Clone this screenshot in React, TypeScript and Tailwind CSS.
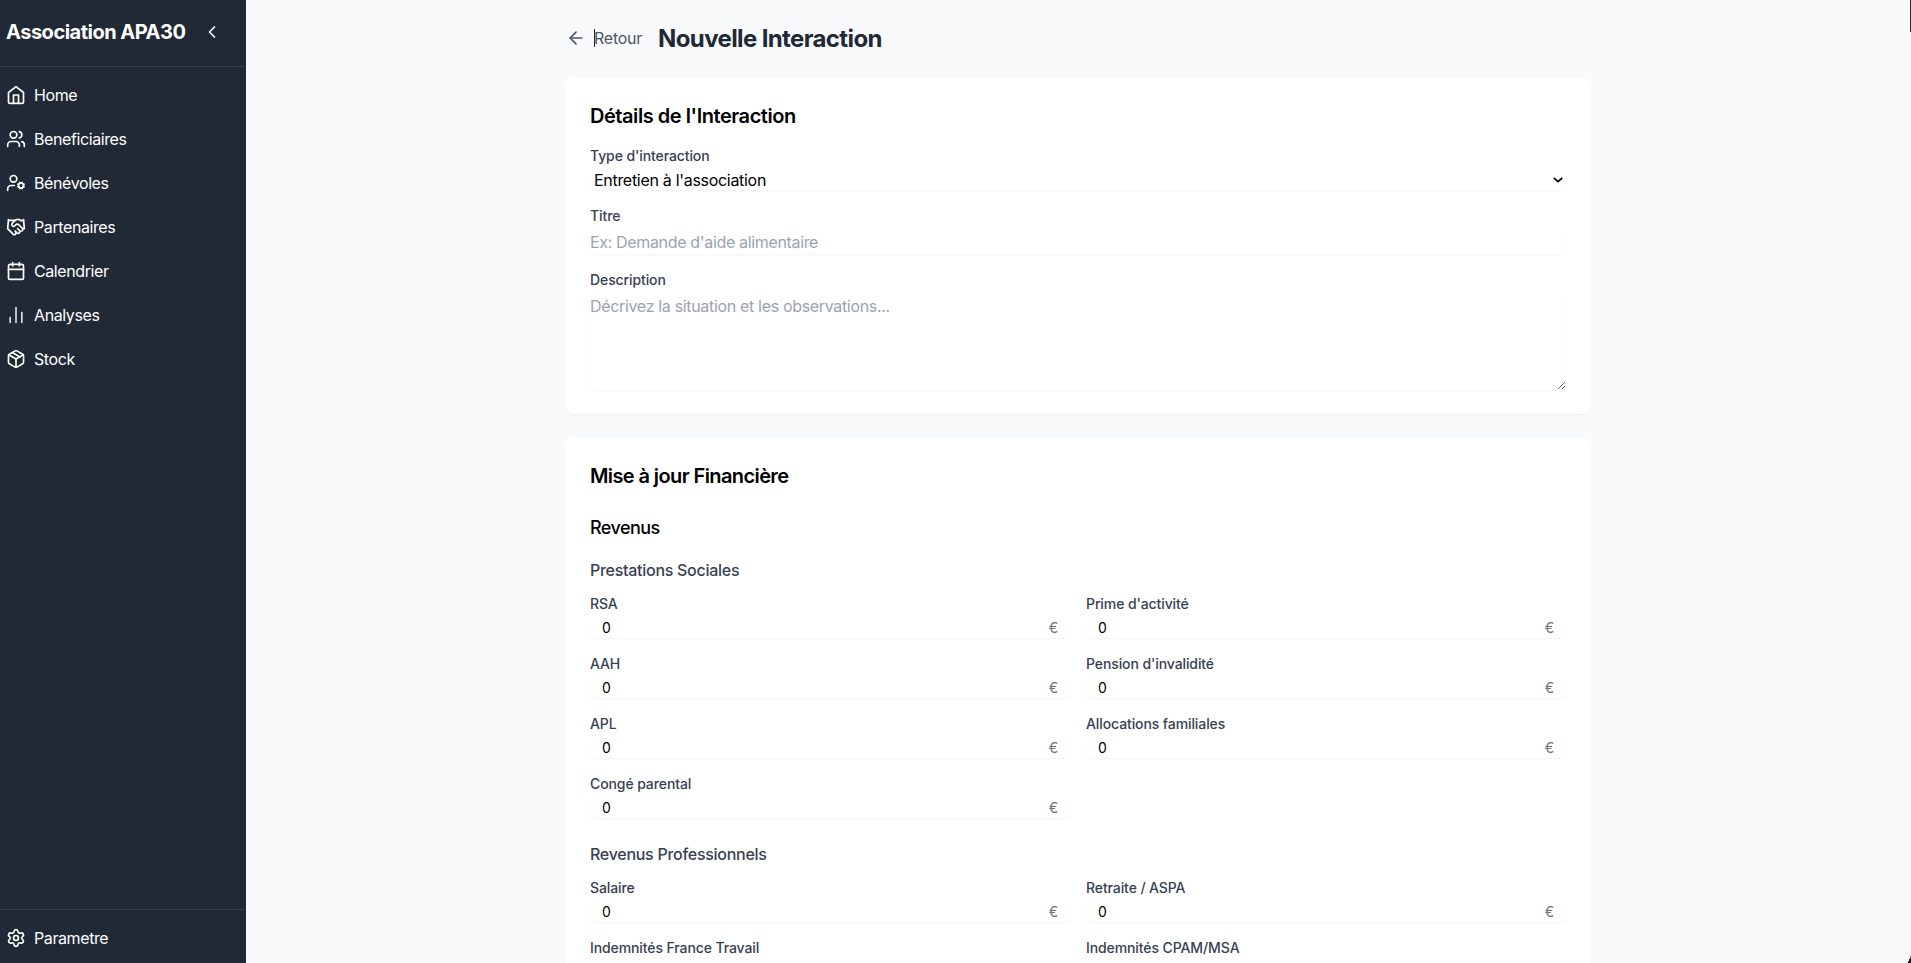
import type { ReactNode } from "react";
import {
  ArrowLeft,
  Calendar,
  ChartNoAxesColumn,
  ChevronLeft,
  Handshake,
  Package,
  Settings,
  UserCog,
  Users,
} from "lucide-react";

function HomeIcon() {
  return (
    <svg
      width="20"
      height="20"
      viewBox="0 0 24 24"
      fill="none"
      stroke="currentColor"
      strokeWidth="2"
      strokeLinecap="round"
      strokeLinejoin="round"
    >
      <path d="m3 9 9-7 9 7v11a2 2 0 0 1-2 2H5a2 2 0 0 1-2-2z" />
      <polyline points="9 22 9 12 15 12 15 22" />
    </svg>
  );
}

const navItems: { label: string; icon: ReactNode }[] = [
  { label: "Home", icon: <HomeIcon /> },
  { label: "Beneficiaires", icon: <Users size={20} /> },
  { label: "Bénévoles", icon: <UserCog size={20} /> },
  { label: "Partenaires", icon: <Handshake size={20} /> },
  { label: "Calendrier", icon: <Calendar size={20} /> },
  { label: "Analyses", icon: <ChartNoAxesColumn size={20} className="opacity-85" /> },
  { label: "Stock", icon: <Package size={20} /> },
];

function NavItem({ label, icon }: { label: string; icon: ReactNode }) {
  return (
    <a className="flex h-10 items-center gap-2 px-1.5">
      {icon}
      <span className="tracking-[-0.4px]">{label}</span>
    </a>
  );
}

function Sidebar() {
  return (
    <aside className="flex w-[246px] shrink-0 flex-col bg-[#212936] text-white">
      <div className="flex h-[67px] items-center justify-between border-b border-[#374151] pr-6 pb-[3px] pl-1.5">
        <span className="text-xl font-bold tracking-[-0.5px]">Association APA30</span>
        <ChevronLeft size={20} />
      </div>
      <nav className="flex flex-1 flex-col gap-1 pt-2">
        {navItems.map((item) => (
          <NavItem key={item.label} {...item} />
        ))}
      </nav>
      <div className="h-[54px] border-t border-[#374151] pt-2">
        <NavItem label="Parametre" icon={<Settings size={20} />} />
      </div>
    </aside>
  );
}

const labelClass = "block text-sm font-medium text-[#374151] tracking-[-0.1px]";

function Card({
  title,
  titleClass,
  children,
}: {
  title: string;
  titleClass: string;
  children: ReactNode;
}) {
  return (
    <section className="rounded-lg bg-white p-6 shadow-xs">
      <h2 className={`text-xl font-semibold text-black ${titleClass}`}>{title}</h2>
      {children}
    </section>
  );
}

function AmountField({ label }: { label: string }) {
  return (
    <div>
      <label className={labelClass}>{label}</label>
      <div className="mt-1 flex h-5 items-center justify-between rounded-md px-3 text-sm shadow-xs">
        <input defaultValue="0" className="h-5 w-40 text-black outline-none" />
        <span className="text-[#6b7280]">€</span>
      </div>
    </div>
  );
}

function AmountGroup({
  title,
  labels,
  pending = [],
}: {
  title: string;
  labels: string[];
  pending?: string[];
}) {
  return (
    <div>
      <h4 className="mb-3 font-medium tracking-[-0.28px] text-[#374151]">{title}</h4>
      <div className="grid grid-cols-2 gap-4">
        {labels.map((label) => (
          <AmountField key={label} label={label} />
        ))}
        {pending.map((label) => (
          <label key={label} className={labelClass}>
            {label}
          </label>
        ))}
      </div>
    </div>
  );
}

export default function App() {
  return (
    <div className="relative flex h-[963px] w-full overflow-hidden bg-[#f9fafc] font-['Inter','Liberation_Sans',sans-serif] text-base">
      <Sidebar />
      <main className="flex-1 overflow-hidden pt-[22px] pr-px">
        <div className="mx-auto w-[1024px]">
          <header className="mb-6 flex h-8 items-center gap-4">
            <button className="flex items-center gap-2 text-[#4b5563]">
              <ArrowLeft size={20} />
              <span className="relative tracking-[-0.25px]">
                <span className="absolute top-[3px] left-0 h-[18px] w-px bg-[#1f2937]" />
                Retour
              </span>
            </button>
            <h1 className="pt-0.5 text-2xl font-bold tracking-[-0.62px] text-[#1f2937]">
              Nouvelle Interaction
            </h1>
          </header>

          <div className="flex flex-col gap-6">
            <Card title="Détails de l'Interaction" titleClass="tracking-[-0.45px]">
              <div className="mt-4 flex flex-col gap-4">
                <div>
                  <label className={labelClass}>Type d'interaction</label>
                  <div className="mt-1 flex h-5 items-center justify-between rounded-md pr-[3px] pl-1 shadow-xs">
                    <span className="tracking-[-0.3px] text-black">Entretien à l'association</span>
                    <svg width="10" height="6" viewBox="0 0 10 6" fill="none" stroke="#000" strokeWidth="1.8">
                      <path d="M0.8 0.8 5 4.6 9.2 0.8" />
                    </svg>
                  </div>
                </div>
                <div>
                  <label className={labelClass}>Titre</label>
                  <input
                    placeholder="Ex: Demande d'aide alimentaire"
                    className="mt-1 block h-6 w-full rounded-md tracking-[-0.34px] shadow-xs outline-none placeholder:text-[#9ca3af]"
                  />
                </div>
                <div>
                  <label className={labelClass}>Description</label>
                  <textarea
                    placeholder="Décrivez la situation et les observations..."
                    className="mt-1 block h-24 w-full resize-y rounded-md tracking-[-0.33px] shadow-xs outline-none placeholder:text-[#9ca3af]"
                  />
                </div>
              </div>
            </Card>

            <Card title="Mise à jour Financière" titleClass="tracking-[-0.6px]">
              <h3 className="mt-6 mb-4 text-lg font-medium tracking-[-0.55px] text-black">Revenus</h3>
              <div className="flex flex-col gap-6">
                <AmountGroup
                  title="Prestations Sociales"
                  labels={[
                    "RSA",
                    "Prime d'activité",
                    "AAH",
                    "Pension d'invalidité",
                    "APL",
                    "Allocations familiales",
                    "Congé parental",
                  ]}
                />
                <AmountGroup
                  title="Revenus Professionnels"
                  labels={["Salaire", "Retraite / ASPA"]}
                  pending={["Indemnités France Travail", "Indemnités CPAM/MSA"]}
                />
              </div>
            </Card>
          </div>
        </div>
      </main>
      <div className="absolute top-0 right-0 h-8 w-px bg-[#2d3232]" />
      <svg className="absolute right-0 bottom-0" width="3" height="8" viewBox="0 0 3 8">
        <path d="M3 0V8H0V6H1V4H2Z" fill="#1c201e" />
      </svg>
    </div>
  );
}
